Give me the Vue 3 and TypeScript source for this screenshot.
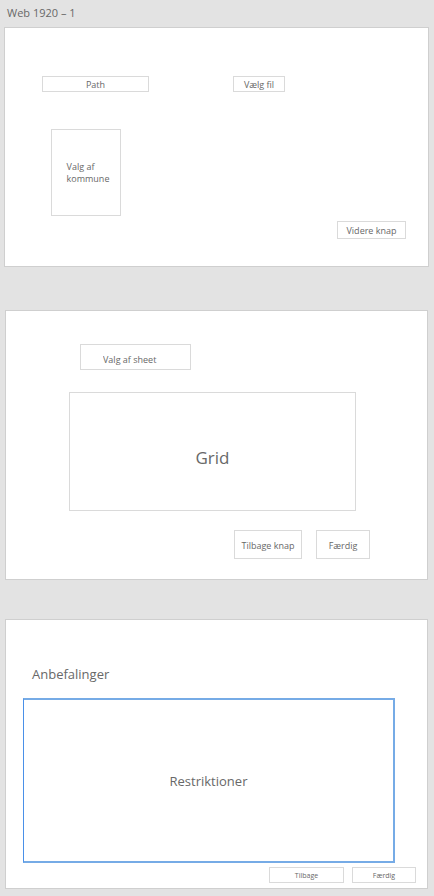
<script setup lang="ts">
import { ref } from 'vue'

const path = ref<string>('Path')
const sheet = ref<string>('Valg af sheet')
const sheets: string[] = ['Valg af sheet']
</script>

<template>
  <main class="canvas">
    <h1 class="board-name">Web 1920 – 1</h1>

    <section class="board board-file" aria-label="Fil">
      <div class="file-row">
        <input v-model="path" class="box path" type="text" aria-label="Path" />
        <button class="box pick" type="button">Vælg fil</button>
      </div>
      <div class="kommune-row">
        <button class="box kommune" type="button">Valg af<br />kommune</button>
      </div>
      <div class="next-row">
        <button class="box next" type="button">Videre knap</button>
      </div>
    </section>

    <section class="board board-sheet" aria-label="Sheet">
      <div class="sheet-row">
        <select v-model="sheet" class="box sheet" aria-label="Valg af sheet">
          <option v-for="name in sheets" :key="name">{{ name }}</option>
        </select>
      </div>
      <div class="grid-row">
        <div class="box data-grid">Grid</div>
      </div>
      <div class="sheet-actions">
        <button class="box back" type="button">Tilbage knap</button>
        <button class="box done" type="button">Færdig</button>
      </div>
    </section>

    <section class="board board-rules" aria-label="Anbefalinger">
      <h2 class="heading">Anbefalinger</h2>
      <div class="rules-row">
        <div class="rules">Restriktioner</div>
      </div>
      <div class="rules-actions">
        <button class="box small back" type="button">Tilbage</button>
        <button class="box small done" type="button">Færdig</button>
      </div>
    </section>
  </main>
</template>

<style>
body {
  margin: 0;
  background: #e3e3e3;
}
</style>

<style scoped>
.canvas {
  display: flex;
  flex-direction: column;
  padding: 0 6px 7px 5px;
  background: #e3e3e3;
  color: #686868;
  font-family: 'Open Sans', 'Noto Sans', sans-serif;
  font-size: 9px;
  line-height: 12px;
}

.canvas * {
  box-sizing: border-box;
}

.board-name {
  margin: 0;
  padding: 5px 2px 6px;
  font-size: 11px;
  font-weight: 400;
  line-height: 16px;
}

.board {
  display: flex;
  flex-direction: column;
  border: 1px solid #cfcfcf;
  background: #fff;
}

.board-file {
  margin: 0 -1px 43px;
  padding: 48px 0 27px;
}

.board-sheet {
  margin-bottom: 39px;
  padding: 33px 0 20px;
}

.board-rules {
  padding: 44px 0 5px;
}

.box {
  display: flex;
  align-items: center;
  justify-content: center;
  width: 100%;
  min-width: 0;
  margin: 0;
  padding: 2px 0 0;
  border: 1px solid #dadada;
  border-radius: 0;
  background: #fff;
  color: inherit;
  font: inherit;
  white-space: nowrap;
}

.file-row {
  display: grid;
  grid-template-columns: 37fr 107fr 84fr 52fr 143fr;
}

.path {
  grid-column: 2;
  height: 16px;
  padding: 0;
  text-align: center;
}

.pick {
  grid-column: 4;
  height: 16px;
}

.kommune-row {
  display: grid;
  grid-template-columns: 46fr 70fr 307fr;
  padding-top: 37px;
}

.kommune {
  grid-column: 2;
  height: 87px;
  padding: 0 0 0 4px;
  text-align: left;
}

.next-row {
  display: grid;
  grid-template-columns: 332fr 69fr 22fr;
  padding-top: 5px;
}

.next {
  grid-column: 2;
  height: 18px;
}

.sheet-row {
  display: grid;
  grid-template-columns: 74fr 111fr 236fr;
}

.sheet {
  grid-column: 2;
  height: 26px;
  padding: 6px 0 0 22px;
  appearance: none;
}

.grid-row {
  display: grid;
  grid-template-columns: 63fr 287fr 71fr;
  padding-top: 22px;
}

.data-grid {
  grid-column: 2;
  height: 119px;
  padding-top: 12px;
  font-size: 17px;
  line-height: 24px;
}

.sheet-actions {
  display: grid;
  grid-template-columns: 228fr 68fr 14fr 54fr 57fr;
  padding-top: 19px;
}

.sheet-actions .box {
  height: 29px;
}

.back {
  grid-column: 2;
}

.done {
  grid-column: 4;
}

.heading {
  margin: 0;
  padding-left: 26px;
  font-size: 13px;
  font-weight: 400;
  line-height: 20px;
}

.rules-row {
  display: grid;
  grid-template-columns: 17fr 372fr 32fr;
  padding-top: 14px;
}

.rules {
  display: flex;
  grid-column: 2;
  align-items: center;
  justify-content: center;
  height: 165px;
  border: 2px solid #76abe6;
  border-left: 1px solid #4a90e8;
  font-size: 13px;
  line-height: 20px;
}

.rules-actions {
  display: grid;
  grid-template-columns: 263fr 75fr 8fr 64fr 11fr;
  padding-top: 4px;
}

.small {
  height: 16px;
  font-size: 7px;
  line-height: 10px;
}
</style>
